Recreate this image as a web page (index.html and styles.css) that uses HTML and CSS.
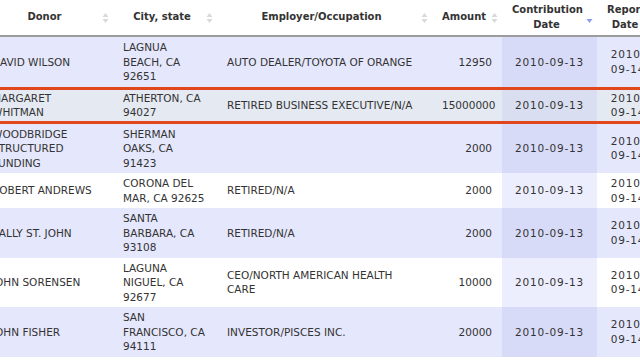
FILE: index.html
```html
<!DOCTYPE html>
<html>
<head>
<meta charset="utf-8">
<link rel="stylesheet" href="styles.css">
</head>
<body>
<table class="grid">
  <colgroup>
    <col class="c-donor"><col class="c-city"><col class="c-emp"><col class="c-amt"><col class="c-cdate"><col class="c-rdate">
  </colgroup>
  <thead>
    <tr>
      <th>Donor<span class="sort"><svg width="7" height="12" viewBox="0 0 7 12"><polygon points="3.5,1 6.5,5 0.5,5" fill="#d9d9d9"/><polygon points="0.5,7 6.5,7 3.5,11" fill="#d9d9d9"/></svg></span></th>
      <th>City, state<span class="sort"><svg width="7" height="12" viewBox="0 0 7 12"><polygon points="3.5,1 6.5,5 0.5,5" fill="#d9d9d9"/><polygon points="0.5,7 6.5,7 3.5,11" fill="#d9d9d9"/></svg></span></th>
      <th>Employer/Occupation<span class="sort"><svg width="7" height="12" viewBox="0 0 7 12"><polygon points="3.5,1 6.5,5 0.5,5" fill="#d9d9d9"/><polygon points="0.5,7 6.5,7 3.5,11" fill="#d9d9d9"/></svg></span></th>
      <th>Amount<span class="sort"><svg width="7" height="12" viewBox="0 0 7 12"><polygon points="3.5,1 6.5,5 0.5,5" fill="#d9d9d9"/><polygon points="0.5,7 6.5,7 3.5,11" fill="#d9d9d9"/></svg></span></th>
      <th>Contribution Date<span class="sort"><svg width="7" height="12" viewBox="0 0 7 12"><polygon points="0.5,7 6.5,7 3.5,11" fill="#8c9cee"/></svg></span></th>
      <th>Report Date</th>
    </tr>
  </thead>
  <tbody>
    <tr class="odd">
      <td>DAVID WILSON</td><td>LAGNUA BEACH, CA 92651</td><td>AUTO DEALER/TOYOTA OF ORANGE</td><td class="num">12950</td><td class="date sorted">2010-09-13</td><td class="date">2010-<wbr>09-14</td>
    </tr>
    <tr class="hl">
      <td>MARGARET WHITMAN</td><td>ATHERTON, CA 94027</td><td>RETIRED BUSINESS EXECUTIVE/N/A</td><td class="num">15000000</td><td class="date sorted">2010-09-13</td><td class="date">2010-<wbr>09-14</td>
    </tr>
    <tr class="odd">
      <td>WOODBRIDGE STRUCTURED FUNDING</td><td>SHERMAN OAKS, CA 91423</td><td></td><td class="num">2000</td><td class="date sorted">2010-09-13</td><td class="date">2010-<wbr>09-14</td>
    </tr>
    <tr class="even">
      <td>ROBERT ANDREWS</td><td>CORONA DEL MAR, CA 92625</td><td>RETIRED/N/A</td><td class="num">2000</td><td class="date sorted">2010-09-13</td><td class="date">2010-<wbr>09-14</td>
    </tr>
    <tr class="odd">
      <td>SALLY ST. JOHN</td><td>SANTA BARBARA, CA 93108</td><td>RETIRED/N/A</td><td class="num">2000</td><td class="date sorted">2010-09-13</td><td class="date">2010-<wbr>09-14</td>
    </tr>
    <tr class="even">
      <td>JOHN SORENSEN</td><td>LAGUNA NIGUEL, CA 92677</td><td>CEO/NORTH AMERICAN HEALTH CARE</td><td class="num">10000</td><td class="date sorted">2010-09-13</td><td class="date">2010-<wbr>09-14</td>
    </tr>
    <tr class="odd">
      <td>JOHN FISHER</td><td>SAN FRANCISCO, CA 94111</td><td>INVESTOR/PISCES INC.</td><td class="num">20000</td><td class="date sorted">2010-09-13</td><td class="date">2010-<wbr>09-14</td>
    </tr>
  </tbody>
</table>
</body>
</html>
```

FILE: styles.css
```css
html, body {
  margin: 0;
  padding: 0;
  overflow: hidden;
  background: #ffffff;
}

.grid {
  margin-left: -18px;
  width: 677px;
  table-layout: fixed;
  border-collapse: separate;
  border-spacing: 0;
  font-family: "DejaVu Sans", Verdana, sans-serif;
  color: #333333;
}

.c-donor { width: 131px; }
.c-city { width: 104px; }
.c-emp { width: 215px; }
.c-amt { width: 70px; }
.c-cdate { width: 95px; }
.c-rdate { width: 62px; }

.grid th {
  position: relative;
  font-size: 10px;
  font-weight: bold;
  line-height: 14.5px;
  color: #333333;
  padding: 3px 16px 3px 10px;
  text-align: center;
  vertical-align: middle;
  border-bottom: 2px solid #9c9c9c;
  background: #ffffff;
}

.sort {
  position: absolute;
  right: 4px;
  top: 50%;
  margin-top: -6px;
  width: 7px;
  height: 12px;
  display: block;
}

.sort svg {
  display: block;
}

.grid td {
  font-size: 10.5px;
  line-height: 14.5px;
  padding: 3px 10px;
  vertical-align: middle;
  text-align: left;
}

.grid td.num {
  text-align: right;
}

.grid td.date {
  text-align: center;
  letter-spacing: 0.8px;
}

.odd td { background: #e5e7fc; }
.odd td.sorted { background: #d8dbf8; }
.even td { background: #ffffff; }
.even td.sorted { background: #eceefd; }

.hl td {
  background: #e5e9f2;
  border-top: 3px solid #e2461d;
  border-bottom: 3px solid #e2461d;
  padding-top: 1px;
  padding-bottom: 1px;
}
.hl td.sorted { background: #d9dff0; }
```
